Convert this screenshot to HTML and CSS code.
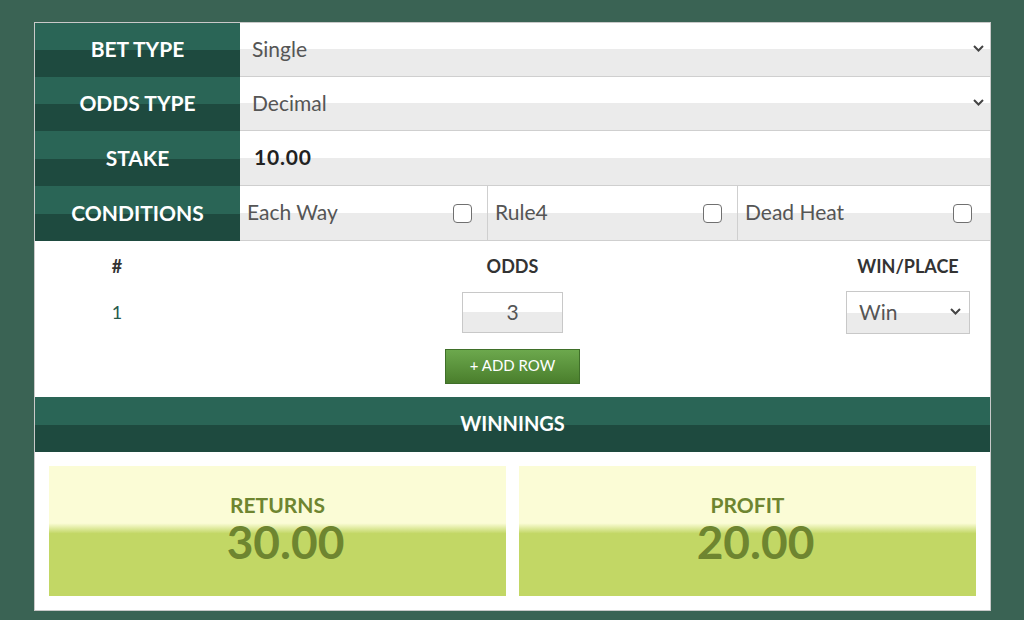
FILE: index.html
```html
<!DOCTYPE html>
<html lang="en">
<head>
    <meta charset="UTF-8">
    <meta name="viewport" content="width=device-width, initial-scale=1.0">
    <title>Bet Calculator</title>
    <link rel="stylesheet" href="styles.css">
</head>
<body>
    <div class="calc">
        <div class="field">
            <div class="label">BET TYPE</div>
            <div class="value select-wrap">
                <select class="big-select">
                    <option>Single</option>
                </select>
                <svg class="chev" width="11" height="7" viewBox="0 0 11 7"><path d="M1 1l4.5 4.5L10 1" fill="none" stroke="#444" stroke-width="2"/></svg>
            </div>
        </div>
        <div class="field">
            <div class="label">ODDS TYPE</div>
            <div class="value select-wrap">
                <select class="big-select">
                    <option>Decimal</option>
                </select>
                <svg class="chev" width="11" height="7" viewBox="0 0 11 7"><path d="M1 1l4.5 4.5L10 1" fill="none" stroke="#444" stroke-width="2"/></svg>
            </div>
        </div>
        <div class="field">
            <div class="label">STAKE</div>
            <div class="value">
                <input class="stake" type="text" value="10.00">
            </div>
        </div>
        <div class="field">
            <div class="label">CONDITIONS</div>
            <div class="value conditions">
                <label class="cond">Each Way <input type="checkbox"></label>
                <label class="cond">Rule4 <input type="checkbox"></label>
                <label class="cond">Dead Heat <input type="checkbox"></label>
            </div>
        </div>

        <div class="legs">
            <div class="legs-row legs-head">
                <div>#</div>
                <div>ODDS</div>
                <div>WIN/PLACE</div>
            </div>
            <div class="legs-row">
                <div class="leg-num">1</div>
                <div><input class="odds" type="text" value="3"></div>
                <div class="select-wrap small">
                    <select class="small-select">
                        <option>Win</option>
                        <option>Place</option>
                    </select>
                    <svg class="chev" width="11" height="7" viewBox="0 0 11 7"><path d="M1 1l4.5 4.5L10 1" fill="none" stroke="#444" stroke-width="2"/></svg>
                </div>
            </div>
            <button class="add-row" type="button">+ ADD ROW</button>
        </div>

        <div class="bar">WINNINGS</div>

        <div class="results">
            <div class="result">
                <div class="result-title">RETURNS</div>
                <div class="result-num">30.00</div>
            </div>
            <div class="result">
                <div class="result-title">PROFIT</div>
                <div class="result-num">20.00</div>
            </div>
        </div>
    </div>
</body>
</html>
```

FILE: styles.css
```css
*{
    margin: 0;
    padding: 0;
    box-sizing: border-box;
}
body{
    background: #3a6354;
    font-family: Lato, "Open Sans", sans-serif;
    padding: 22px 0 0 34px;
    height: 620px;
    overflow: hidden;
}
.calc{
    width: 957px;
    background: #fff;
    border: 1px solid #c9c9c9;
}
.field{
    display: grid;
    grid-template-columns: 205px 1fr;
    height: 54px;
}
.field:nth-child(n+3){
    height: 55px;
}
.label{
    background: linear-gradient(#2a6556 50%, #1e4a3f 50%);
    color: #fff;
    font-size: 21px;
    font-weight: 700;
    padding-bottom: 3px;
    display: flex;
    align-items: center;
    justify-content: center;
}
.value{
    background: linear-gradient(#fff 50%, #ebebeb 50%);
    border-bottom: 1px solid #cfcfcf;
    display: flex;
    align-items: center;
}
.select-wrap{
    position: relative;
}
.big-select, .small-select, .stake, .odds{
    appearance: none;
    -webkit-appearance: none;
    border: none;
    background: transparent;
    font-family: inherit;
    font-size: 21px;
    color: #555;
    outline: none;
}
.big-select{
    width: 100%;
    height: 100%;
    padding: 0 0 3px 12px;
}
.chev{
    position: absolute;
    right: 6px;
    top: 50%;
    margin-top: -5px;
    pointer-events: none;
}
.stake{
    width: 100%;
    height: 100%;
    padding: 0 0 3px 14px;
    font-weight: 700;
    letter-spacing: 0.8px;
    color: #222;
}
.conditions{
    display: grid;
    grid-template-columns: 248px 250px 1fr;
}
.cond{
    height: 100%;
    display: flex;
    align-items: center;
    justify-content: space-between;
    padding: 0 15px 3px 7px;
    font-size: 21px;
    color: #555;
    border-right: 1px solid #cfcfcf;
}
.cond:last-child{
    border-right: none;
    padding-right: 18px;
}
.cond input{
    appearance: none;
    -webkit-appearance: none;
    width: 19px;
    height: 19px;
    margin-top: 3px;
    border: 1.5px solid #707070;
    border-radius: 4px;
    background: #fff;
}
.legs{
    padding-top: 14px;
    display: flex;
    flex-direction: column;
    align-items: center;
}
.legs-row{
    width: 100%;
    display: grid;
    grid-template-columns: 164px 1fr 164px;
    text-align: center;
    align-items: center;
}
.legs-head{
    font-size: 18px;
    font-weight: 700;
    color: #333;
    line-height: 22px;
}
.legs-head + .legs-row{
    margin-top: 14px;
    height: 43px;
}
.leg-num{
    font-size: 18px;
    color: #285a4c;
    padding-bottom: 2px;
}
.odds{
    width: 101px;
    height: 41px;
    border: 1px solid #c8c8c8;
    background: linear-gradient(#fff 50%, #ebebeb 50%);
    text-align: center;
    padding-bottom: 3px;
}
.select-wrap.small{
    width: 124px;
    height: 43px;
    margin: 0 auto;
}
.small-select{
    width: 100%;
    height: 100%;
    border: 1px solid #c8c8c8;
    background: linear-gradient(#fff 50%, #ebebeb 50%);
    padding: 0 0 3px 12px;
}
.select-wrap.small .chev{
    right: 9px;
}
.add-row{
    margin-top: 15px;
    width: 135px;
    height: 35px;
    border: 1px solid #3f6f29;
    background: linear-gradient(#6ca84d, #4a7e2c);
    color: #fff;
    font-family: inherit;
    font-size: 15px;
    padding-bottom: 3px;
}
.bar{
    margin-top: 13px;
    height: 55px;
    background: linear-gradient(#2a6556 50%, #1e4a3f 50%);
    color: #fff;
    font-size: 20px;
    font-weight: 700;
    padding-bottom: 3px;
    display: flex;
    align-items: center;
    justify-content: center;
}
.results{
    padding: 14px;
    display: grid;
    grid-template-columns: 1fr 1fr;
    gap: 13px;
}
.result{
    height: 130px;
    padding-top: 27px;
    background: linear-gradient(#fbfcd6 44%, #c2d765 52%);
    color: #6e8530;
    text-align: center;
    font-weight: 700;
}
.result-title{
    font-size: 21px;
    line-height: 24px;
}
.result-num{
    font-size: 46px;
    line-height: 50px;
    padding-left: 16px;
}
```
